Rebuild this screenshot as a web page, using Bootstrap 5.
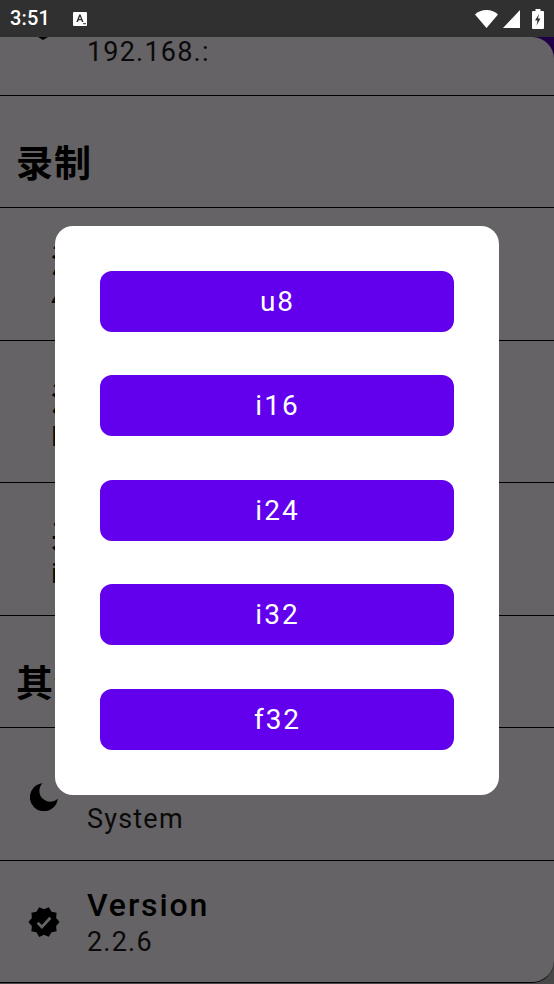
<!DOCTYPE html>
<html lang="zh">
<head>
<meta charset="utf-8">
<title>Settings</title>
<link href="https://cdn.jsdelivr.net/npm/bootstrap@5.3.0/dist/css/bootstrap.min.css" rel="stylesheet">
<style>
html,body{width:554px;height:984px;overflow:hidden;margin:0}
body{background:#303030;font-family:Roboto,"Noto Sans CJK SC",sans-serif;color:#000;position:relative}
.sbar{height:37px;background:#303030;color:#fff;padding:0 10px 0 10px}
.sbar-time{font-size:20px;font-weight:500;line-height:37px;width:62px;letter-spacing:.2px}
.sig{margin-left:5px}
.bat{margin-left:12px}
.backdrop{height:947px;background:linear-gradient(#1f0047 0 50%,#484848 50% 100%)}
.sheet{height:946px;background:#656365;border-radius:0 22px 22px 0;overflow:hidden;border-bottom:1px solid #000}
.rowx{border-bottom:1.5px solid #000}
.h-top{height:59px}
.h-sec{height:112px;padding-left:16px;padding-top:25px}
.h-a{height:133px;padding-top:6px}
.h-b{height:142px;padding-top:6px}
.h-c{height:122px;border-bottom:0}
.sec-title{font-size:37px;font-weight:700;line-height:1;letter-spacing:1px;color:#000}
.ico-col{width:87px}
.no-ico{padding-left:51px}
.t1{font-size:32px;font-weight:500;letter-spacing:1.9px;line-height:44px;color:#000}
.t2{font-size:27px;letter-spacing:1.2px;line-height:30px;color:#0a0a0a}
.h-c .t1{line-height:36px}
.h-c .t2{margin-top:4px}
.t-top{padding-left:87px}
.tip{margin-left:-49px}
.t-top .t2{margin-top:-3px}
.dlg-wrap{position:absolute;left:55px;top:226px;width:444px;height:569px;background:#fff;border-radius:18px;padding:45px;gap:43.4px}
.btn-fmt{height:61px;background:#6200ee;border:0;border-radius:12px;color:#fff;font-size:28px;letter-spacing:2px;font-family:Roboto,sans-serif;padding:0 0 0 1px;line-height:61px}
.btn-fmt:hover,.btn-fmt:active{background:#6200ee;color:#fff}
</style>
</head>
<body>
<div class="sbar d-flex align-items-center">
  <span class="sbar-time">3:51</span>
  <svg width="16" height="16" viewBox="0 0 16 16" aria-hidden="true"><rect x="1" y="1" width="14" height="14" rx="1" fill="#fff"/><path d="M4.3 11 7.2 3.6h1.4L11.500 11H9.900l-.6-1.700H6.600L6 11zM7 8.100h1.900L8 5.500z" fill="#303030"/><rect x="11" y="12.200" width="3" height="1" fill="#303030"/></svg>
  <div class="ms-auto d-flex align-items-center">
    <svg width="23" height="18" viewBox="0 0 23 18" aria-hidden="true"><path d="M11.500 18 0 4.500Q4.500 0 11.500 0T23 4.500z" fill="#fff"/></svg>
    <svg class="sig" width="17" height="18" viewBox="0 0 17 18" aria-hidden="true"><path d="M0 18 17 0v18z" fill="#fff"/></svg>
    <svg class="bat" width="12" height="20" viewBox="0 0 12 20" aria-hidden="true"><path d="M3.500 0h5v2H11q1 0 1 1v16q0 1-1 1H1q-1 0-1-1V3q0-1 1-1h2.500z" fill="#fff"/><path d="M7 5 3 11.500h2.500l-1 5 4-7H6z" fill="#303030"/></svg>
  </div>
</div>
<div class="backdrop">
  <main class="sheet">
    <div class="rowx h-top t-top d-flex flex-column">
      <svg class="tip" width="10" height="3" viewBox="0 0 10 3" aria-hidden="true"><path d="M0 0h10L5 3z" fill="#000"/></svg>
      <div class="t2">192.168.:</div>
    </div>
    <div class="rowx h-sec d-flex align-items-center"><span class="sec-title">录制</span></div>
    <div class="rowx h-a no-ico d-flex flex-column justify-content-center"><div class="t1">深度</div><div class="t2">48000</div></div>
    <div class="rowx h-b no-ico d-flex flex-column justify-content-center"><div class="t1">深度</div><div class="t2">L</div></div>
    <div class="rowx h-a no-ico d-flex flex-column justify-content-center"><div class="t1">采样</div><div class="t2">i16</div></div>
    <div class="rowx h-sec d-flex align-items-center"><span class="sec-title">其他</span></div>
    <div class="rowx h-a d-flex align-items-center">
      <div class="ico-col d-flex justify-content-center">
        <svg width="28" height="28" viewBox="0 0 28 28" aria-hidden="true"><path d="M12.500.3A14 14 0 1 0 27.800 15.500 9.500 9.500 0 0 1 12.500.3z" fill="#000"/></svg>
      </div>
      <div><div class="t1">Theme</div><div class="t2">System</div></div>
    </div>
    <div class="rowx h-c d-flex align-items-center">
      <div class="ico-col d-flex justify-content-center">
        <svg width="34" height="34" viewBox="0 0 24 24" aria-hidden="true"><path d="m23 12-2.440-2.790.34-3.690-3.610-.82-1.890-3.200L12 2.960 8.600 1.500 6.710 4.690 3.100 5.500l.34 3.700L1 12l2.440 2.790-.34 3.700 3.610.82L8.600 22.500l3.400-1.470 3.400 1.460 1.890-3.190 3.610-.82-.34-3.690L23 12z" fill="#000"/><path d="m7.500 12.500 3 3 6-6.500" fill="none" stroke="#656365" stroke-width="2"/></svg>
      </div>
      <div><div class="t1">Version</div><div class="t2">2.2.6</div></div>
    </div>
  </main>
</div>
<div class="dlg-wrap d-flex flex-column" role="dialog">
  <button class="btn btn-fmt" type="button">u8</button>
  <button class="btn btn-fmt" type="button">i16</button>
  <button class="btn btn-fmt" type="button">i24</button>
  <button class="btn btn-fmt" type="button">i32</button>
  <button class="btn btn-fmt" type="button">f32</button>
</div>
<script src="https://cdn.jsdelivr.net/npm/bootstrap@5.3.0/dist/js/bootstrap.bundle.min.js"></script>
</body>
</html>
